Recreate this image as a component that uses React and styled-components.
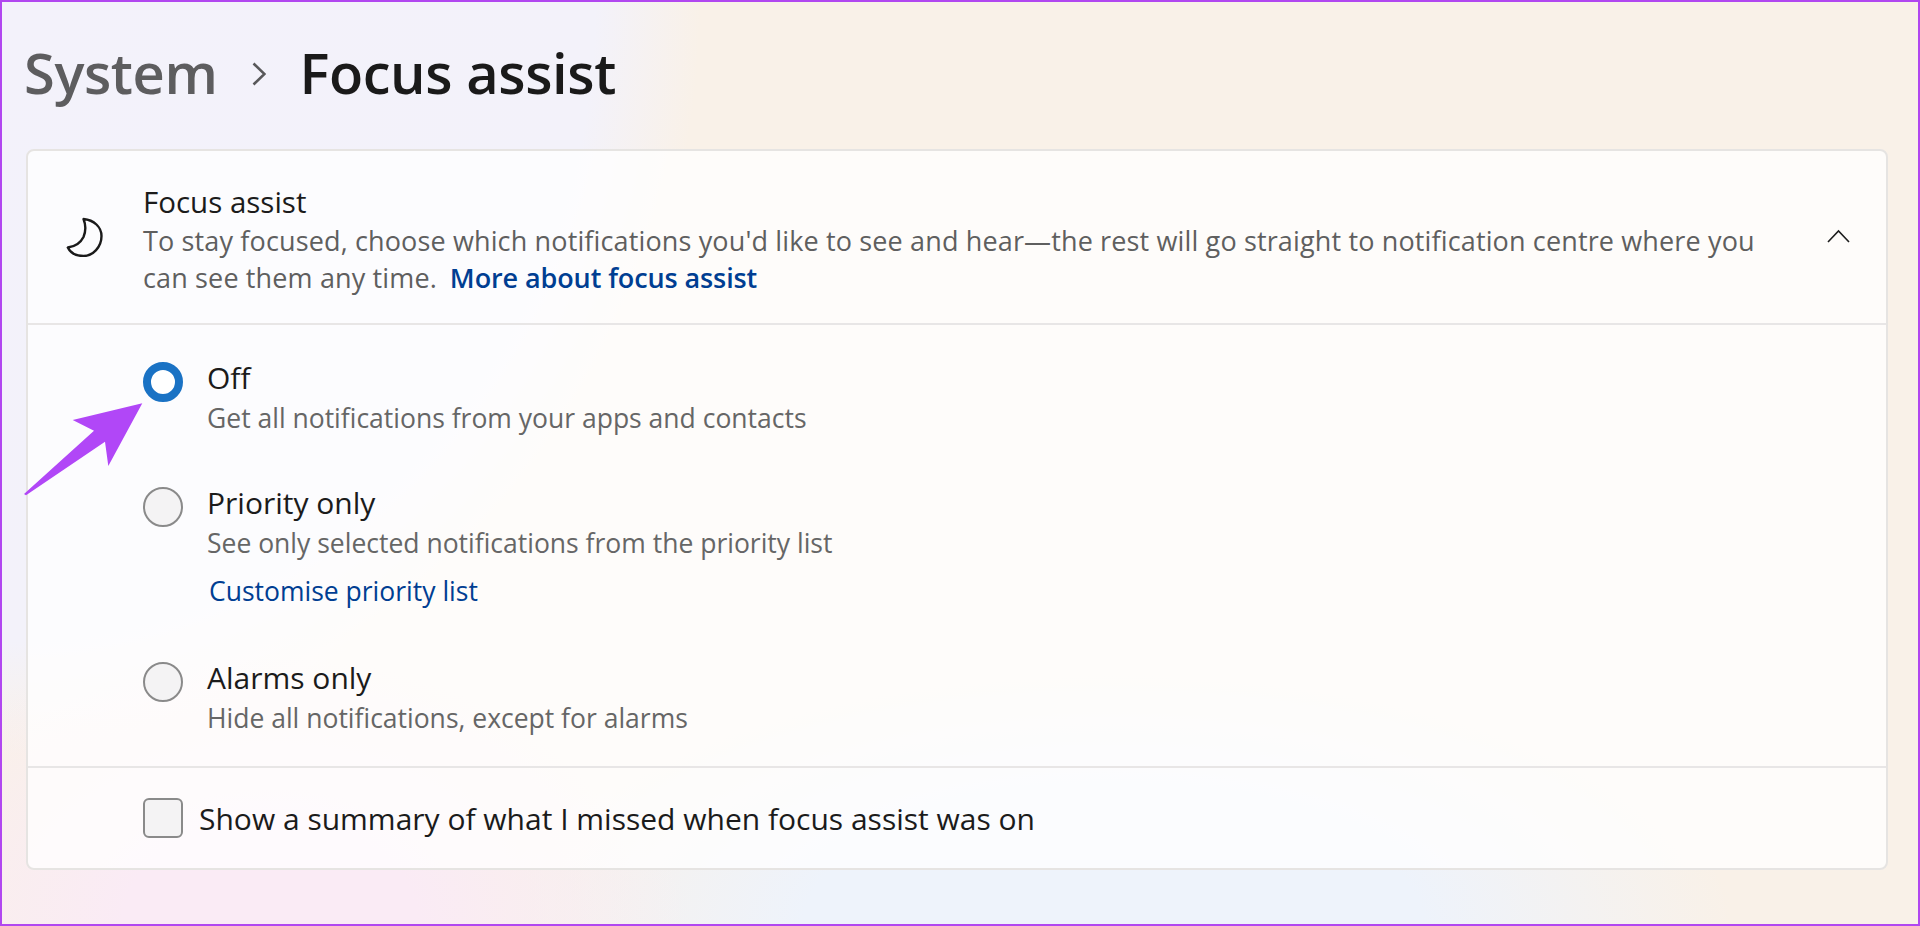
import React from 'react';
import styled, { createGlobalStyle } from 'styled-components';

const GlobalStyles = createGlobalStyle`
  html, body {
    margin: 0;
    padding: 0;
  }
  body {
    font-family: "Open Sans", "Noto Sans", "Liberation Sans", sans-serif;
    color: #1b1b1b;
  }
`;

const Page = styled.div`
  position: relative;
  box-sizing: border-box;
  width: 1920px;
  height: 926px;
  overflow: hidden;
  border: 2px solid #b147f0;
  padding: 0 30px 0 24px;
  background:
    radial-gradient(ellipse 420px 300px at 14% 100%, #faebf5 0%, #faebf5 35%, rgba(250, 235, 245, 0) 100%),
    radial-gradient(ellipse 620px 260px at 58% 100%, #eef3fb 0%, #eef3fb 50%, rgba(238, 243, 251, 0) 100%),
    radial-gradient(ellipse 760px 820px at 0% 0%, #f3f2fb 0%, #f3f2fa 78%, rgba(243, 242, 250, 0) 92%),
    #f9f1e8;
`;

const Breadcrumb = styled.header`
  display: flex;
  align-items: center;
  box-sizing: border-box;
  height: 147px;
  margin-left: -2px;
  padding-bottom: 8px;
  font-size: 56px;
  font-weight: 600;
  letter-spacing: -0.4px;
`;

const Parent = styled.span`
  color: #5d5d5f;
`;

const Current = styled.span`
  color: #1a1a1a;
`;

const Separator = styled.svg`
  width: 14px;
  height: 24px;
  margin: 4px 33px 0 35px;
  fill: none;
  stroke: #58585a;
  stroke-width: 2.6;
`;

const Card = styled.section`
  box-sizing: border-box;
  height: 721px;
  border: 2px solid #e6e4e2;
  border-radius: 8px;
  background: rgba(255, 255, 255, 0.76);
`;

const Header = styled.div`
  display: flex;
  align-items: center;
  box-sizing: border-box;
  height: 174px;
  padding: 14px 36px 0 38px;
  border-bottom: 2px solid #e8e6e6;
`;

const MoonIcon = styled.svg`
  flex: none;
  width: 38px;
  height: 40px;
  margin: 0 39px 14px 0;
  fill: none;
  stroke: #1a1a1a;
  stroke-width: 2.4;
  stroke-linejoin: round;
`;

const HeaderText = styled.div`
  flex: 1;
  margin-top: -10px;
`;

const Title = styled.div`
  font-size: 29.5px;
  line-height: 40px;
  color: #1b1b1b;
`;

const Description = styled.div`
  font-size: 27px;
  line-height: 37px;
  letter-spacing: 0.14px;
  color: #5f5f5f;
`;

const StrongLink = styled.a`
  margin-left: 6px;
  font-weight: 600;
  letter-spacing: -0.1px;
  color: #003e92;
`;

const Collapse = styled.svg`
  flex: none;
  width: 24px;
  height: 14px;
  margin-top: -16px;
  fill: none;
  stroke: #1e1e1e;
  stroke-width: 1.6;
`;

const Options = styled.div`
  box-sizing: border-box;
  height: 443px;
  padding: 32px 0 0 115px;
  border-bottom: 2px solid #e8e6e6;
`;

const Option = styled.div`
  display: flex;
  gap: 24px;
  height: ${(p) => p.$height}px;
`;

const Radio = styled.span`
  flex: none;
  box-sizing: border-box;
  width: 40px;
  height: 40px;
  margin-top: 5px;
  border-radius: 50%;
  border: ${(p) => (p.$checked ? '8px solid #1a72c4' : '2px solid #8a8a8a')};
  background: ${(p) => (p.$checked ? '#fff' : '#f4f3f4')};
`;

const OptionLabel = styled.div`
  font-size: 30px;
  line-height: 41px;
  color: #1b1b1b;
`;

const OptionHint = styled.div`
  margin-top: 2px;
  font-size: 26.5px;
  line-height: 37px;
  color: #666;
`;

const PlainLink = styled.a`
  display: block;
  margin: 11px 0 0 2px;
  font-size: 26.5px;
  line-height: 37px;
  color: #003e92;
`;

const Footer = styled.div`
  display: flex;
  align-items: center;
  gap: 16px;
  height: 100px;
  padding-left: 115px;
`;

const Checkbox = styled.span`
  box-sizing: border-box;
  width: 40px;
  height: 40px;
  border: 2px solid #8a8a8a;
  border-radius: 6px;
  background: #f4f3f4;
`;

const FooterLabel = styled.span`
  font-size: 30px;
  color: #1b1b1b;
`;

const Arrow = styled.svg`
  position: absolute;
  left: -2px;
  top: -2px;
  width: 1920px;
  height: 926px;
  pointer-events: none;
`;

const OPTIONS = [
  { label: 'Off', hint: 'Get all notifications from your apps and contacts', height: 125, checked: true },
  { label: 'Priority only', hint: 'See only selected notifications from the priority list', link: 'Customise priority list', height: 175 },
  { label: 'Alarms only', hint: 'Hide all notifications, except for alarms', height: 100 },
];

export default function App() {
  return (
    <Page>
      <GlobalStyles />
      <Breadcrumb>
        <Parent>System</Parent>
        <Separator viewBox="0 0 14 24">
          <path d="M1.5 1.5L12.5 12 1.5 22.5" />
        </Separator>
        <Current>Focus assist</Current>
      </Breadcrumb>
      <Card>
        <Header>
          <MoonIcon viewBox="0 0 38 40">
            <path d="M17.5 2C28 3 35.5 10 35.5 19 35.5 30 27 39 17.5 39 10.5 39 4.5 36 1.8 30.5 10 29.5 15 25 17.5 20 20 14 19.5 7 17.5 2z" />
          </MoonIcon>
          <HeaderText>
            <Title>Focus assist</Title>
            <Description>
              To stay focused, choose which notifications you'd like to see and hear—the rest will go straight to notification centre where you
              <br />
              can see them any time.
              <StrongLink> More about focus assist</StrongLink>
            </Description>
          </HeaderText>
          <Collapse viewBox="0 0 24 14">
            <path d="M2 13L12.5 2 23 13" />
          </Collapse>
        </Header>
        <Options>
          {OPTIONS.map((o) => (
            <Option key={o.label} $height={o.height}>
              <Radio $checked={o.checked} />
              <div>
                <OptionLabel>{o.label}</OptionLabel>
                <OptionHint>{o.hint}</OptionHint>
                {o.link && <PlainLink>{o.link}</PlainLink>}
              </div>
            </Option>
          ))}
        </Options>
        <Footer>
          <Checkbox />
          <FooterLabel>Show a summary of what I missed when focus assist was on</FooterLabel>
        </Footer>
      </Card>
      <Arrow viewBox="0 0 1920 926">
        <path d="M142.3 403.3L72.7 420 94 430.7 24 494 26 495.3 105 441.7 108.3 466z" fill="#b147f7" />
      </Arrow>
    </Page>
  );
}
